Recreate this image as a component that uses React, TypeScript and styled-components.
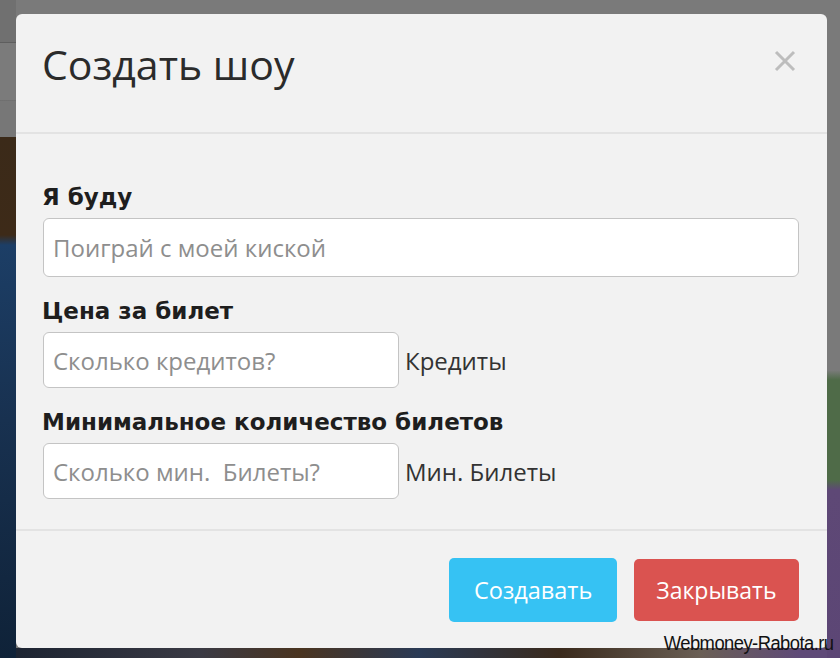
import React from 'react'
import styled, { createGlobalStyle } from 'styled-components'

const GlobalStyle = createGlobalStyle`
  html, body {
    margin: 0;
    padding: 0;
    width: 840px;
    height: 658px;
    overflow: hidden;
  }
  body {
    font-family: 'Open Sans', 'DejaVu Sans', sans-serif;
  }
`

// dimmed page behind the modal, painted as gradients
const Backdrop = styled.div`
  position: relative;
  width: 840px;
  height: 658px;
  box-sizing: border-box;
  padding: 14px 13px 10px 16px;
  background:
    linear-gradient(to bottom, #707070 0, #707070 42px, #5e5e5e 42px, #5e5e5e 43px,
      #7b7b7b 43px, #7b7b7b 100px, #686868 100px, #777 101px, #777 137px,
      #3b2a19 137px, #3d2a18 235px, #1c3e66 245px, #183150 420px, #0f2238 658px) left top / 16px 100% no-repeat,
    linear-gradient(to bottom, #7a7a7a 0, #7a7a7a 370px, #7c7c7c 370px, #4f6b48 380px, #4f6b48 480px,
      #5e4876 490px, #5c4675 658px) right top / 13px 100% no-repeat,
    linear-gradient(to right, #1a2230 0, #3a3a44 200px, #4a3420 300px, #2a3a55 420px, #3a2a1c 560px,
      #6a5f55 700px, #5f4a78 800px) left bottom / 100% 10px no-repeat,
    #7a7a7a;
`

const Modal = styled.div`
  width: 811px;
  height: 634px;
  background: #f2f2f2;
  border-radius: 6px;
  display: flex;
  flex-direction: column;
  overflow: hidden;
`

const Header = styled.div`
  height: 120px;
  box-sizing: border-box;
  border-bottom: 2px solid #e3e3e3;
  display: flex;
  align-items: flex-start;
  justify-content: space-between;
  padding: 21px 30px 0 26px;
`

const Title = styled.h1`
  margin: 0;
  font-family: 'Open Sans', sans-serif;
  font-weight: 400;
  font-size: 41px;
  line-height: 58px;
  color: #2b2b2b;
  letter-spacing: 0;
`

const CloseButton = styled.button`
  border: none;
  background: none;
  padding: 0;
  margin-top: 14px;
  width: 24px;
  height: 24px;
  cursor: pointer;
`

const Body = styled.div`
  flex: 1;
  box-sizing: border-box;
  padding: 48px 26px 0 26px;
  border-bottom: 2px solid #e3e3e3;
  display: flex;
  flex-direction: column;
`

const Label = styled.label<{ $first?: boolean }>`
  display: block;
  font-family: 'DejaVu Sans', Verdana, sans-serif;
  font-weight: 700;
  font-size: 23px;
  line-height: 30px;
  color: #1e1e1e;
  margin: ${({ $first }) => ($first ? '0' : '19px')} 0 6px 0;
`

const Field = styled.div`
  display: flex;
  align-items: center;
  gap: 6px;
`

const Input = styled.input<{ $width?: number }>`
  width: ${({ $width }) => ($width ? `${$width}px` : '756px')};
  height: ${({ $width }) => ($width ? '56px' : '59px')};
  box-sizing: border-box;
  margin-left: 1px;
  border: 1.5px solid #c4c4c4;
  border-radius: 6px;
  background: #fff;
  padding: 0 9px;
  font-family: 'Open Sans', sans-serif;
  font-size: 24px;
  color: #333;
  outline: none;
  &::placeholder {
    color: #8e8e8e;
  }
`

const Addon = styled.span`
  font-family: 'Open Sans', sans-serif;
  font-size: 24px;
  color: #333;
`

const Footer = styled.div`
  height: 117px;
  box-sizing: border-box;
  display: flex;
  justify-content: flex-end;
  align-items: flex-start;
  gap: 17px;
  padding: 27px 28px 0 0;
`

const Button = styled.button<{ $variant: 'info' | 'danger' }>`
  height: ${({ $variant }) => ($variant === 'info' ? '64px' : '62px')};
  margin-top: ${({ $variant }) => ($variant === 'info' ? '0' : '1px')};
  padding: ${({ $variant }) => ($variant === 'info' ? '0 24.5px' : '0 22.5px')};
  border: none;
  border-radius: 5px;
  background: ${({ $variant }) => ($variant === 'info' ? '#36c2f3' : '#da5350')};
  color: #fff;
  font-family: 'Open Sans', sans-serif;
  font-size: ${({ $variant }) => ($variant === 'info' ? '23.5px' : '23px')};
  cursor: pointer;
`

const Watermark = styled.div`
  position: absolute;
  right: 7px;
  bottom: 3px;
  font-family: 'Liberation Sans Narrow', 'Liberation Sans', Arial, sans-serif;
  font-size: 20px;
  color: #111;
  letter-spacing: -0.6px;
  transform: scaleX(0.92);
  transform-origin: right bottom;
`

export default function App() {
  return (
    <Backdrop>
      <GlobalStyle />
      <Modal>
        <Header>
          <Title>Создать шоу</Title>
          <CloseButton aria-label="close">
            <svg width="24" height="24" viewBox="0 0 24 24">
              <path d="M3 3 L21 21 M21 3 L3 21" stroke="#bdbdbd" strokeWidth="3" />
            </svg>
          </CloseButton>
        </Header>
        <Body>
          <Label $first>Я буду</Label>
          <Field>
            <Input placeholder="Поиграй с моей киской" />
          </Field>
          <Label>Цена за билет</Label>
          <Field>
            <Input $width={356} placeholder="Сколько кредитов?" />
            <Addon>Кредиты</Addon>
          </Field>
          <Label>Минимальное количество билетов</Label>
          <Field>
            <Input $width={356} placeholder="Сколько мин.  Билеты?" />
            <Addon>Мин. Билеты</Addon>
          </Field>
        </Body>
        <Footer>
          <Button $variant="info">Создавать</Button>
          <Button $variant="danger">Закрывать</Button>
        </Footer>
      </Modal>
      <Watermark>Webmoney-Rabota.ru</Watermark>
    </Backdrop>
  )
}
